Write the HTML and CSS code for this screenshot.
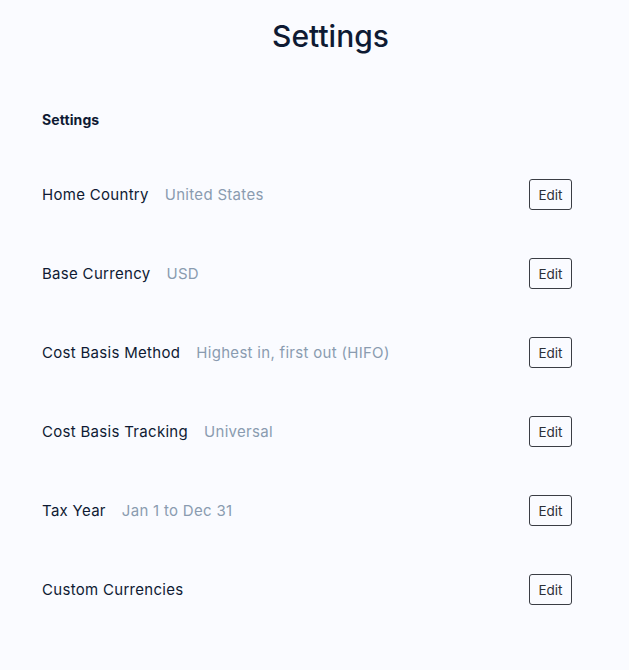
FILE: index.html
```html
<!DOCTYPE html>
<html lang="en">
<head>
    <meta charset="UTF-8">
    <title>Settings</title>
    <link rel="stylesheet" href="styles.css">
</head>
<body>
    <div id="settings-page">
        <h1 id="page-title">Settings</h1>
        <div id="settings-panel">
            <h2 id="panel-header">Settings</h2>
            <div class="setting-row">
                <div class="setting-info">
                    <span class="setting-label">Home Country</span>
                    <span class="setting-value">United States</span>
                </div>
                <button class="edit-btn">Edit</button>
            </div>
            <div class="setting-row">
                <div class="setting-info">
                    <span class="setting-label">Base Currency</span>
                    <span class="setting-value">USD</span>
                </div>
                <button class="edit-btn">Edit</button>
            </div>
            <div class="setting-row">
                <div class="setting-info">
                    <span class="setting-label">Cost Basis Method</span>
                    <span class="setting-value">Highest in, first out (HIFO)</span>
                </div>
                <button class="edit-btn">Edit</button>
            </div>
            <div class="setting-row">
                <div class="setting-info">
                    <span class="setting-label">Cost Basis Tracking</span>
                    <span class="setting-value">Universal</span>
                </div>
                <button class="edit-btn">Edit</button>
            </div>
            <div class="setting-row">
                <div class="setting-info">
                    <span class="setting-label">Tax Year</span>
                    <span class="setting-value">Jan 1 to Dec 31</span>
                </div>
                <button class="edit-btn">Edit</button>
            </div>
            <div class="setting-row">
                <div class="setting-info">
                    <span class="setting-label">Custom Currencies</span>
                </div>
                <button class="edit-btn">Edit</button>
            </div>
        </div>
    </div>
</body>
</html>
```

FILE: styles.css
```css
body {
    margin: 0;
    background-color: #fafbff;
    font-family: Inter, "Noto Sans", sans-serif;
    color: #0e1a33;
}

#settings-page {
    width: 629px;
    height: 670px;
}

#page-title {
    margin: 0;
    padding: 17px 0 0 32px;
    text-align: center;
    font-size: 30px;
    font-weight: 500;
    line-height: 38px;
}

#settings-panel {
    padding: 0 57px 0 42px;
}

#panel-header {
    margin: 55px 0 0;
    font-size: 14px;
    font-weight: 700;
    line-height: 20px;
    letter-spacing: 0.1px;
}

.setting-row {
    display: flex;
    align-items: center;
    justify-content: space-between;
    height: 31px;
    margin-top: 48px;
}

.setting-row:first-of-type {
    margin-top: 49px;
}

.setting-info {
    display: flex;
    gap: 16px;
    font-size: 15px;
    letter-spacing: 0.3px;
}

.setting-value {
    color: #8a9bb0;
}

.edit-btn {
    width: 43px;
    height: 31px;
    padding: 0;
    border: 1px solid #3a3d44;
    border-radius: 3px;
    background-color: transparent;
    color: #2c3038;
    font-family: inherit;
    font-size: 13.5px;
    cursor: pointer;
}
```
